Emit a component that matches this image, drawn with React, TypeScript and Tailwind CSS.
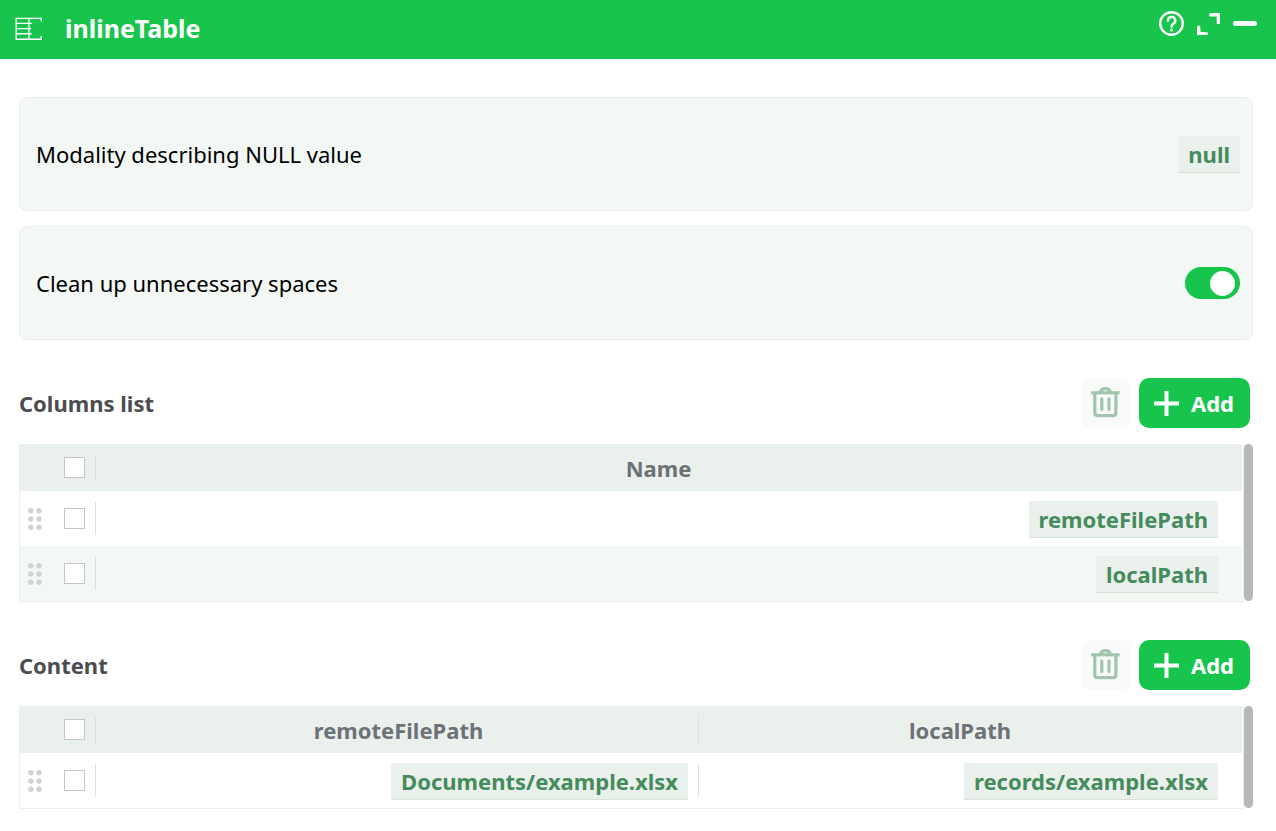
import React, { useState } from 'react';

interface Column {
  name: string;
  width?: string;
}

interface SectionProps {
  title: string;
  columns: Column[];
  rows: string[][];
}

const TableIcon: React.FC = () => (
  <svg width="28" height="24" viewBox="0 0 28 24" fill="none" stroke="#fff" strokeWidth="1.4" aria-hidden="true">
    <path d="M26.3 4.6V1.4H1.2V22.2H26.3V19" />
    <path d="M13.9 1.4V22.2M1.2 6.4H16.8M1.2 11.6H16.2M1.2 16.7H16.8" />
  </svg>
);

const HelpIcon: React.FC = () => (
  <svg width="25" height="25" viewBox="0 0 25 25" fill="none" stroke="#fff" strokeWidth="2.4" strokeLinecap="round">
    <circle cx="12.5" cy="12.5" r="11.3" />
    <path d="M8.9 9.7A3.7 3.7 0 1 1 14.3 12.9C13.1 13.6 12.6 14.2 12.6 15.5" />
    <circle cx="12.6" cy="19" r="1.5" fill="#fff" stroke="none" />
  </svg>
);

const ExpandIcon: React.FC = () => (
  <svg width="23" height="22" viewBox="0 0 23 22" fill="#fff">
    <path d="M13.2 0H23V10Q23 11 22 11H20.7Q19.7 11 19.7 10V3.6H13.2Q12.2 3.6 12.2 2.6V1Q12.2 0 13.2 0Z" />
    <path d="M1.6 12.6Q3.4 12.6 3.4 14.4V18.8L10.8 19.6V22H0V14.2Q0 12.6 1.6 12.6Z" />
  </svg>
);

const TrashIcon: React.FC = () => (
  <svg width="29" height="32" viewBox="0 0 29 32" fill="none" stroke="#a1c5ad" strokeWidth="3.2">
    <path d="M0.2 5.8H28.6" />
    <path d="M9.6 5.2C10 0.4 18.8 0.4 19.2 5.2" />
    <path d="M3.8 6V25.4Q3.8 28.7 7.1 28.7H21.6Q24.9 28.7 24.9 25.4V6" />
    <path d="M10.8 11.8V22.6M18 11.8V22.6" strokeLinecap="round" />
  </svg>
);

const PlusIcon: React.FC = () => (
  <svg width="25" height="25" viewBox="0 0 25 25" fill="none" stroke="#fff" strokeWidth="4">
    <path d="M12.5 0V25M0 12.5H25" />
  </svg>
);

const GripIcon: React.FC = () => (
  <svg width="14" height="22" viewBox="0 0 14 22" fill="#d2d2d2" aria-hidden="true">
    {[2.8, 11, 19.2].map((y) => (
      <g key={y}>
        <circle cx="2.8" cy={y} r="2.7" />
        <circle cx="11" cy={y} r="2.7" />
      </g>
    ))}
  </svg>
);

const Tick: React.FC<{ label: string }> = ({ label }) => (
  <input
    type="checkbox"
    aria-label={label}
    className="block w-[21px] h-[21px] appearance-none border border-[#c6c6c8] bg-white checked:bg-[#18c54c]"
  />
);

const Value: React.FC<{ children: React.ReactNode }> = ({ children }) => (
  <button className="block h-[37px] shrink-0 px-[10px] border-b border-[#d5e3db] bg-[#eaf0ec] text-[22px] leading-[36px] font-bold text-[#458b5c]">
    {children}
  </button>
);

const Section: React.FC<SectionProps> = ({ title, columns, rows }) => (
  <section className="mt-[38px]">
    <div className="flex items-center justify-between pr-[3px]">
      <h2 className="text-[22px] font-bold text-[#4c4d52]">{title}</h2>
      <div className="flex gap-2">
        <button
          aria-label="Delete selection"
          className="flex w-[50px] h-[50px] items-center justify-center rounded-[10px] bg-[#f9fbfa]"
        >
          <TrashIcon />
        </button>
        <button className="flex h-[50px] items-center gap-3 rounded-[10px] bg-[#18c54c] pl-[15px] pr-4 text-[22px] font-bold text-white">
          <PlusIcon />
          Add
        </button>
      </div>
    </div>

    <div className="mt-4 flex">
      <div className="min-w-0 grow border-x border-b border-[#eaf0ec] pr-px">
        <table className="w-full table-fixed border-collapse text-[22px]">
          <colgroup>
            <col className="w-[36px]" />
            <col className="w-[40px]" />
            {columns.map((col) => (
              <col key={col.name} className={col.width} />
            ))}
            <col className="w-[24px]" />
          </colgroup>
          <thead>
            <tr className="h-[47px] bg-[#eaf0ec]">
              <td />
              <td className="p-0">
                <div className="flex h-7 items-center border-r border-[#dbe4df] pl-2">
                  <Tick label={`Select all of ${title}`} />
                </div>
              </td>
              {columns.map((col, i) => (
                <th key={col.name} className="p-0 font-bold text-[#6c7278]">
                  <div
                    className={`flex h-7 items-center justify-center pt-[2px] pl-[3px] ${
                      i < columns.length - 1 ? 'border-r border-[#dbe4df]' : ''
                    }`}
                  >
                    {col.name}
                  </div>
                </th>
              ))}
              <td />
            </tr>
          </thead>
          <tbody>
            {rows.map((row, r) => (
              <tr key={r} className="h-[55px] even:bg-[#f3f8f5]">
                <td className="p-0 pl-2">
                  <GripIcon />
                </td>
                <td className="p-0">
                  <div className="flex h-[33px] items-center border-r border-[#d5e3db] pl-2">
                    <Tick label={`Select row ${r + 1}`} />
                  </div>
                </td>
                {row.map((value, i) => (
                  <td key={i} className="p-0">
                    <div
                      className={`flex h-[33px] items-center justify-end pt-[2px] ${
                        i < row.length - 1 ? 'border-r border-[#d5e3db] pr-[10px]' : ''
                      }`}
                    >
                      <Value>{value}</Value>
                    </div>
                  </td>
                ))}
                <td />
              </tr>
            ))}
          </tbody>
        </table>
      </div>
      <div className="mb-px w-[9px] shrink-0 rounded-full bg-[#b7b8ba]" />
    </div>
  </section>
);

const App: React.FC = () => {
  const [clean, setClean] = useState(true);

  return (
    <div className="min-h-screen bg-white font-['Noto_Sans',sans-serif]">
      <header className="flex h-[59px] items-center justify-between bg-[#18c54c] pl-[15px] pr-[19px]">
        <div className="flex items-center gap-[22px] pb-[2px]">
          <TableIcon />
          <h1 className="text-[25px] font-bold text-white">inlineTable</h1>
        </div>
        <div className="flex items-center gap-[13px] pb-3">
          <button aria-label="Help"><HelpIcon /></button>
          <button aria-label="Expand"><ExpandIcon /></button>
          <button aria-label="Minimize" className="h-[5px] w-6 rounded-full bg-white" />
        </div>
      </header>

      <main className="pt-[38px] pl-[19px] pr-[23px]">
        <div className="flex h-[114px] items-center justify-between rounded-lg border border-[#ebedec] bg-[#f3f8f5] pl-4 pr-3 text-[22px]">
          <span>Modality describing NULL value</span>
          <Value>null</Value>
        </div>

        <div className="mt-[15px] flex h-[114px] items-center justify-between rounded-lg border border-[#ebedec] bg-[#f3f8f5] pl-4 pr-3 text-[22px]">
          <label htmlFor="clean">Clean up unnecessary spaces</label>
          <input
            id="clean"
            type="checkbox"
            role="switch"
            checked={clean}
            onChange={(e) => setClean(e.target.checked)}
            className="flex h-8 w-[55px] appearance-none items-center rounded-full bg-gray-300 px-[5px] before:block before:h-[25px] before:w-[25px] before:rounded-full before:bg-white checked:justify-end checked:bg-[#18c54c]"
          />
        </div>

        <Section title="Columns list" columns={[{ name: 'Name' }]} rows={[['remoteFilePath'], ['localPath']]} />
        <Section
          title="Content"
          columns={[{ name: 'remoteFilePath', width: 'w-[49.35%]' }, { name: 'localPath' }]}
          rows={[['Documents/example.xlsx', 'records/example.xlsx']]}
        />
      </main>
    </div>
  );
};

export default App;
